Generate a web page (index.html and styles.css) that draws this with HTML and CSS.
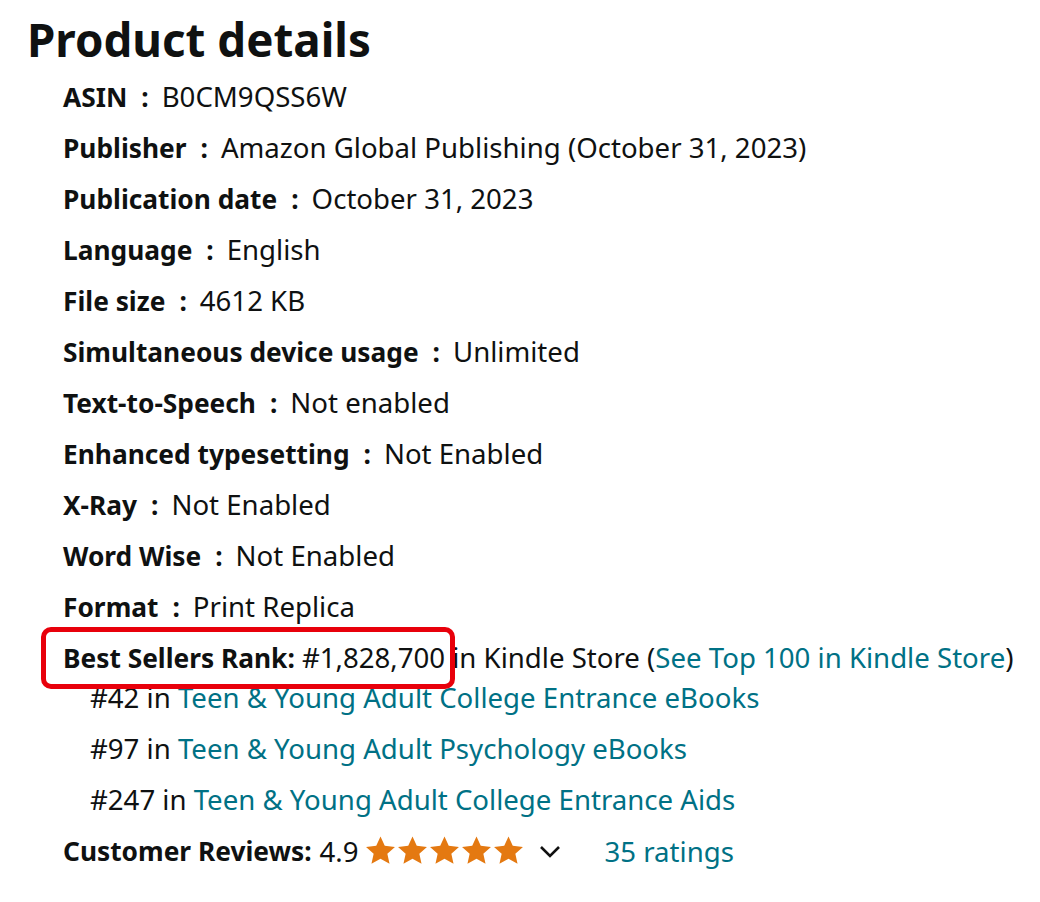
FILE: index.html
```html
<!DOCTYPE html>
<html>
<head>
<meta charset="utf-8">
<link rel="stylesheet" href="styles.css">
</head>
<body>
<div class="page">
  <h2 class="title">Product details</h2>
  <ul class="details">
    <li><span class="label">ASIN</span><span class="sep">:</span><span>B0CM9QSS6W</span></li>
    <li><span class="label">Publisher</span><span class="sep">:</span><span>Amazon Global Publishing (October 31, 2023)</span></li>
    <li><span class="label">Publication date</span><span class="sep">:</span><span>October 31, 2023</span></li>
    <li><span class="label">Language</span><span class="sep">:</span><span>English</span></li>
    <li><span class="label">File size</span><span class="sep">:</span><span>4612 KB</span></li>
    <li><span class="label">Simultaneous device usage</span><span class="sep">:</span><span>Unlimited</span></li>
    <li><span class="label">Text-to-Speech</span><span class="sep">:</span><span>Not enabled</span></li>
    <li><span class="label">Enhanced typesetting</span><span class="sep">:</span><span>Not Enabled</span></li>
    <li><span class="label">X-Ray</span><span class="sep">:</span><span>Not Enabled</span></li>
    <li><span class="label">Word Wise</span><span class="sep">:</span><span>Not Enabled</span></li>
    <li><span class="label">Format</span><span class="sep">:</span><span>Print Replica</span></li>
  </ul>
  <div class="rank">
    <div class="rank-main"><span class="highlight"><span class="bold">Best Sellers Rank:</span> #1,828,700</span> in Kindle Store (<a class="link">See Top 100 in Kindle Store</a>)</div>
    <ul class="rank-list">
      <li>#42 in <a class="link">Teen &amp; Young Adult College Entrance eBooks</a></li>
      <li>#97 in <a class="link">Teen &amp; Young Adult Psychology eBooks</a></li>
      <li>#247 in <a class="link">Teen &amp; Young Adult College Entrance Aids</a></li>
    </ul>
  </div>
  <div class="reviews">
    <span class="bold">Customer Reviews:</span>
    <span class="score">4.9</span>
    <span class="stars">
      <svg viewBox="0 0 24 24" class="star"><path d="M12 1.2l3.3 7.2 7.9.8-5.9 5.3 1.7 7.8L12 18.3l-7 4 1.7-7.8L.8 9.2l7.9-.8z"/></svg>
      <svg viewBox="0 0 24 24" class="star"><path d="M12 1.2l3.3 7.2 7.9.8-5.9 5.3 1.7 7.8L12 18.3l-7 4 1.7-7.8L.8 9.2l7.9-.8z"/></svg>
      <svg viewBox="0 0 24 24" class="star"><path d="M12 1.2l3.3 7.2 7.9.8-5.9 5.3 1.7 7.8L12 18.3l-7 4 1.7-7.8L.8 9.2l7.9-.8z"/></svg>
      <svg viewBox="0 0 24 24" class="star"><path d="M12 1.2l3.3 7.2 7.9.8-5.9 5.3 1.7 7.8L12 18.3l-7 4 1.7-7.8L.8 9.2l7.9-.8z"/></svg>
      <svg viewBox="0 0 24 24" class="star"><path d="M12 1.2l3.3 7.2 7.9.8-5.9 5.3 1.7 7.8L12 18.3l-7 4 1.7-7.8L.8 9.2l7.9-.8z"/></svg>
    </span>
    <svg class="chevron" viewBox="0 0 24 16"><path d="M3 4l9 9 9-9" fill="none" stroke="#111" stroke-width="2.6"/></svg>
    <a class="link ratings">35 ratings</a>
  </div>
</div>
</body>
</html>
```

FILE: styles.css
```css
* { box-sizing: border-box; }
html, body { margin: 0; padding: 0; background: #fff; }
body {
  font-family: "Noto Sans", "Open Sans", sans-serif;
  color: #0f1111;
  font-size: 27.6px;
}
.page { padding: 11px 0 0 27px; }
.title {
  margin: 0;
  font-size: 45.7px;
  font-weight: 700;
  line-height: 56px;
}
.details {
  list-style: none;
  margin: 4px 0 0 0;
  padding: 0 0 0 36px;
}
.details li {
  height: 51px;
  line-height: 51px;
  white-space: nowrap;
}
.label, .bold { font-weight: 700; font-size: 26.3px; }
.sep { font-weight: 700; font-size: 26.3px; margin: 0 13px 0 14px; }
.rank { padding-left: 36px; }
.rank-main { height: 51px; line-height: 51px; white-space: nowrap; }
.highlight {
  position: relative;
}
.highlight::before {
  content: "";
  position: absolute;
  left: -22px;
  right: -10px;
  top: -11px;
  bottom: -13px;
  border: 5px solid #e8000b;
  border-radius: 10px;
}
.link { color: #007185; text-decoration: none; }
.rank-list {
  list-style: none;
  margin: -11px 0 0 0;
  padding: 0 0 0 27px;
}
.rank-list li { height: 51px; line-height: 51px; white-space: nowrap; }
.reviews {
  padding-left: 36px;
  height: 51px;
  display: flex;
  align-items: center;
  white-space: nowrap;
}
.score { margin-left: 8px; }
.stars { display: inline-flex; margin-left: 6px; gap: 1px; }
.star { width: 31px; height: 31px; fill: #e47911; }
.chevron { width: 24px; height: 16px; margin-left: 14px; }
.ratings { margin-left: 43px; }
```
